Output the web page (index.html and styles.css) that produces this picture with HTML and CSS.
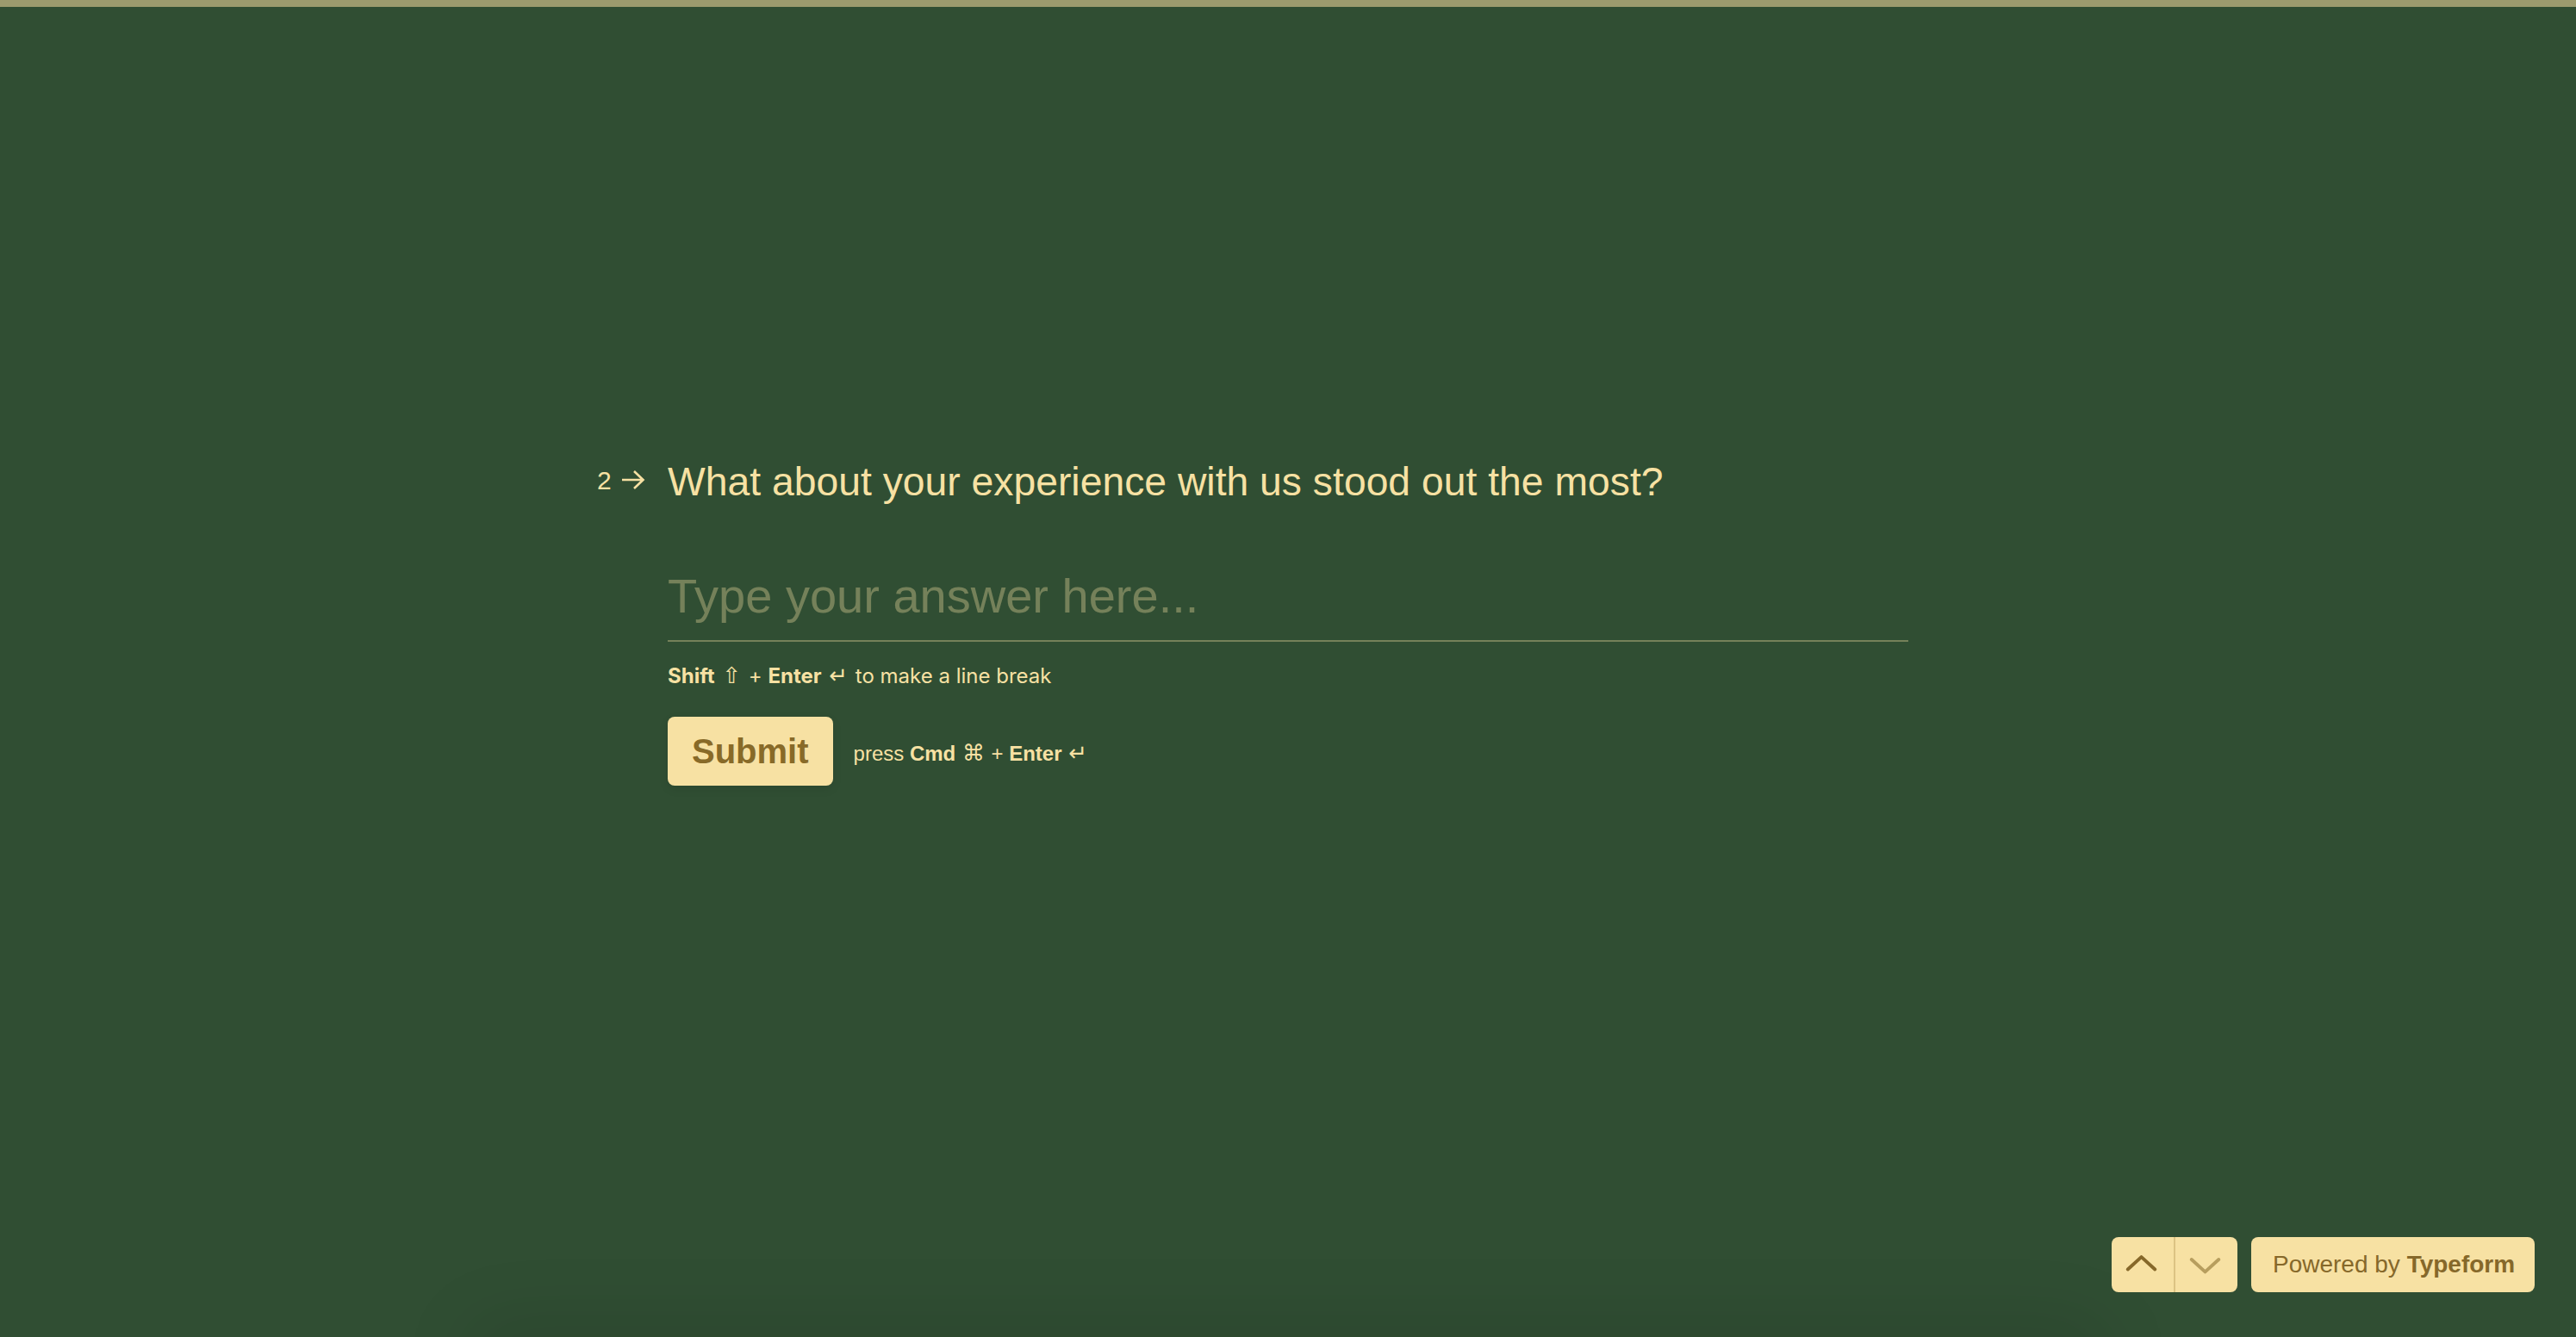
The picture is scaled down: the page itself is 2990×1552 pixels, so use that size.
FILE: index.html
```html
<!DOCTYPE html>
<html lang="en">
<head>
<meta charset="utf-8">
<title>Typeform</title>
<link rel="stylesheet" href="styles.css">
</head>
<body>
<div class="topbar"></div>
<main class="form">
  <div class="question">
    <div class="qnum">
      <span class="qnum-digit">2</span>
      <svg class="qnum-arrow" width="28" height="24" viewBox="0 0 28 24" aria-hidden="true">
        <path d="M1 12 H25 M15 2 L25.5 12 L15 22" fill="none" stroke="currentColor" stroke-width="2.6"/>
      </svg>
    </div>
    <h1 class="qtext">What about your experience with us stood out the most?</h1>
  </div>
  <textarea class="answer" rows="1" placeholder="Type your answer here..."></textarea>
  <p class="hint"><b>Shift</b> <span class="glyph">⇧</span> + <b>Enter</b> <span class="glyph">↵</span> to make a line break</p>
  <div class="actions">
    <button class="submit" type="button">Submit</button>
    <span class="press">press <b>Cmd</b> <span class="glyph">⌘</span> + <b>Enter</b> <span class="glyph">↵</span></span>
  </div>
</main>
<footer class="footer">
  <div class="nav">
    <button class="nav-btn" type="button" aria-label="Previous">
      <svg width="73" height="64" viewBox="0 0 73 64"><path d="M19 37.5 L35 23 L51 37.5" fill="none" stroke="currentColor" stroke-width="4" stroke-linecap="round" stroke-linejoin="round"/></svg>
    </button>
    <span class="nav-divider"></span>
    <button class="nav-btn nav-btn-disabled" type="button" aria-label="Next">
      <svg width="73" height="64" viewBox="0 0 73 64"><path d="M19 26 L35 40.5 L51 26" fill="none" stroke="currentColor" stroke-width="4" stroke-linecap="round" stroke-linejoin="round"/></svg>
    </button>
  </div>
  <a class="powered" href="#"><span class="powered-label">Powered by <b>Typeform</b></span></a>
</footer>
<div class="bottom-shade"></div>
</body>
</html>
```
FILE: styles.css
```css
html, body {
  margin: 0;
  padding: 0;
}
body {
  background: #304e33;
  height: 1552px;
  overflow: hidden;
  color: #f7e1a3;
  font-family: "Liberation Sans", Arial, sans-serif;
}
.topbar {
  height: 8px;
  background: #9c9b6e;
}
.form {
  width: 1440px;
  margin: 0 auto;
  padding-top: 521px;
  display: flex;
  flex-direction: column;
  align-items: flex-start;
}
.question {
  display: flex;
  align-items: flex-start;
  width: 100%;
}
.qnum {
  margin-left: -82px;
  width: 82px;
  display: flex;
  align-items: center;
  gap: 11px;
  padding-top: 14px;
  font-family: "Liberation Sans", Arial, sans-serif;
  font-size: 30px;
  line-height: 30px;
}
.qnum-arrow {
  display: block;
  margin-top: -2px;
}
.qtext {
  margin: 0;
  font-weight: 400;
  font-size: 46.3px;
  line-height: 60px;
}
.answer {
  margin-top: 69px;
  width: 100%;
  box-sizing: border-box;
  height: 87px;
  padding: 0 0 17px 0;
  border: 0;
  border-bottom: 2px solid rgba(247, 225, 163, 0.35);
  background: transparent;
  color: #f7e1a3;
  font-family: "Liberation Sans", Arial, sans-serif;
  font-size: 56px;
  line-height: 68px;
  resize: none;
  outline: none;
  overflow: hidden;
}
.answer::placeholder {
  color: rgba(247, 225, 163, 0.35);
}
.hint {
  margin: 23px 0 0 0;
  font-family: Inter, "Liberation Sans", sans-serif;
  font-size: 24px;
  line-height: 32px;
}
.hint b, .press b {
  font-weight: 700;
}
.glyph {
  font-family: "DejaVu Sans", sans-serif;
  font-weight: 400;
  font-size: 1.08em;
  display: inline-block;
  margin: 0 2px;
}
.actions {
  margin-top: 31px;
  display: flex;
  align-items: flex-end;
  gap: 24px;
}
.submit {
  height: 80px;
  padding: 0 28px;
  border: 0;
  border-radius: 8px;
  background: #f7e1a3;
  color: #886a28;
  font-family: "Liberation Sans", Arial, sans-serif;
  font-weight: 700;
  font-size: 40px;
  box-shadow: 0 4px 12px rgba(0, 0, 0, 0.08);
}
.press {
  margin-bottom: 21px;
  font-family: "Liberation Sans", Arial, sans-serif;
  font-size: 24px;
  line-height: 32px;
}
.press .glyph {
  margin: 0 1px;
}
.footer {
  position: fixed;
  right: 48px;
  bottom: 52px;
  display: flex;
  gap: 16px;
  z-index: 2;
}
.nav {
  display: flex;
  height: 64px;
  background: #f7e1a3;
  border-radius: 8px;
  overflow: hidden;
}
.nav-btn {
  width: 72px;
  height: 64px;
  padding: 0;
  border: 0;
  background: transparent;
  color: #86682a;
  display: flex;
  align-items: center;
  justify-content: center;
}
.nav-btn svg {
  display: block;
}
.nav-btn-disabled {
  color: #b79e5e;
}
.nav-divider {
  width: 2px;
  background: #dcc383;
}
.powered {
  display: block;
  height: 64px;
  padding: 0 25px;
  box-sizing: border-box;
  width: 329px;
  background: #f7e1a3;
  border-radius: 8px;
  color: #86682a;
  text-decoration: none;
  font-family: "Liberation Sans", Arial, sans-serif;
  font-size: 28px;
  line-height: 64px;
  white-space: nowrap;
}
.bottom-shade {
  position: fixed;
  left: 560px;
  right: 560px;
  bottom: -60px;
  height: 60px;
  box-shadow: 0 0 90px 10px rgba(0, 0, 0, 0.12);
  z-index: 1;
}
```
